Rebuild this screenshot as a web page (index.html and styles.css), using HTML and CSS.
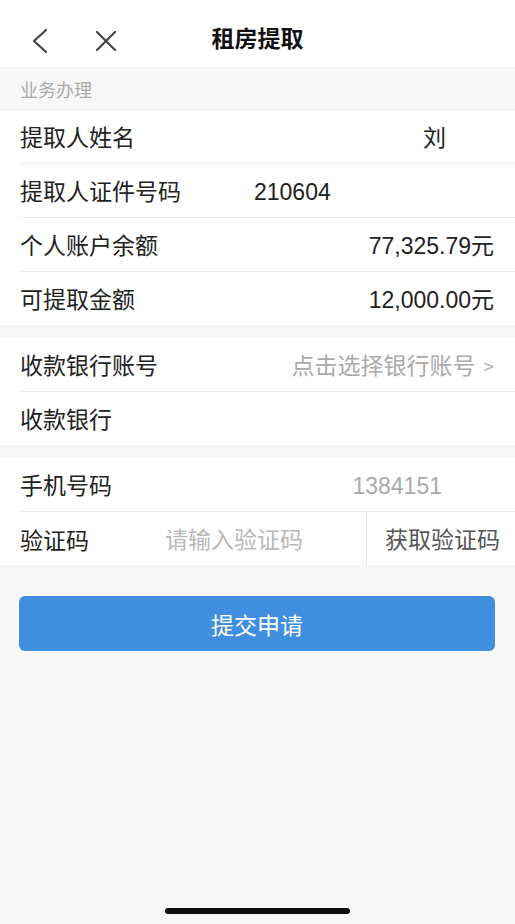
FILE: index.html
```html
<!DOCTYPE html>
<html lang="zh-CN">
<head>
    <meta charset="UTF-8">
    <meta name="viewport" content="width=device-width, initial-scale=1.0">
    <title>租房提取</title>
    <link rel="stylesheet" href="styles.css">
</head>
<body>
    <div class="header">
        <span class="nav-btn back">
            <svg width="20" height="26" viewBox="0 0 20 26"><path d="M15 2 L3 13 L15 24" fill="none" stroke="#444" stroke-width="2.2" stroke-linecap="round" stroke-linejoin="round"/></svg>
        </span>
        <span class="nav-btn close">
            <svg width="22" height="22" viewBox="0 0 22 22"><path d="M2 2 L20 20 M20 2 L2 20" fill="none" stroke="#444" stroke-width="2.2" stroke-linecap="round"/></svg>
        </span>
        <h1>租房提取</h1>
    </div>

    <div class="section-title">业务办理</div>

    <div class="group">
        <div class="row">
            <span class="label">提取人姓名</span>
            <span class="value name">刘</span>
        </div>
        <div class="row">
            <span class="label">提取人证件号码</span>
            <span class="value idno"><span class="num">210604</span></span>
        </div>
        <div class="row">
            <span class="label">个人账户余额</span>
            <span class="value"><span class="num">77,325.79</span>元</span>
        </div>
        <div class="row">
            <span class="label">可提取金额</span>
            <span class="value"><span class="num">12,000.00</span>元</span>
        </div>
    </div>

    <div class="group">
        <div class="row">
            <span class="label">收款银行账号</span>
            <span class="value muted">点击选择银行账号<span class="arrow">&gt;</span></span>
        </div>
        <div class="row">
            <span class="label">收款银行</span>
        </div>
    </div>

    <div class="group">
        <div class="row">
            <span class="label">手机号码</span>
            <span class="value muted phone"><span class="num">1384151</span></span>
        </div>
        <div class="row code-row">
            <span class="label">验证码</span>
            <span class="placeholder">请输入验证码</span>
            <span class="get-code">获取验证码</span>
        </div>
    </div>

    <div class="actions">
        <button>提交申请</button>
    </div>

    <div class="home-bar"></div>
</body>
</html>
```

FILE: styles.css
```css
body {
    margin: 0;
    width: 515px;
    height: 924px;
    background-color: #f7f7f7;
    font-family: "Noto Sans CJK SC", "Noto Sans", sans-serif;
    color: #222;
    position: relative;
    overflow: hidden;
}
.num {
    font-family: "Liberation Sans", Arial, sans-serif;
}
.header {
    height: 67px;
    background-color: white;
    display: flex;
    align-items: center;
    position: relative;
}
.nav-btn {
    display: flex;
    padding-top: 14px;
}
.back {
    margin-left: 31px;
}
.close {
    margin-left: 44px;
}
.header h1 {
    position: absolute;
    left: 0;
    right: 0;
    top: 22px;
    margin: 0;
    text-align: center;
    font-size: 23px;
    line-height: 30px;
    font-weight: bold;
    color: #111;
}
.section-title {
    height: 43px;
    padding-left: 20px;
    padding-top: 2px;
    box-sizing: border-box;
    display: flex;
    align-items: center;
    font-size: 18px;
    color: #aaa;
    border-bottom: 1px solid #ececec;
}
.group {
    background-color: white;
    margin-bottom: 13px;
}
.row {
    height: 54px;
    margin-left: 20px;
    padding-right: 21px;
    padding-bottom: 2px;
    display: flex;
    align-items: center;
    font-size: 23px;
    border-bottom: 1px solid #eeeeee;
    box-sizing: border-box;
}
.row:last-child {
    border-bottom: none;
    height: 53px;
}
.label {
    flex-shrink: 0;
}
.value {
    margin-left: auto;
}
.value.name {
    margin-right: 48px;
}
.value.idno {
    margin-left: 73px;
}
.muted {
    color: #aaa;
}
.arrow {
    font-size: 19px;
    margin-left: 8px;
    color: #b5b5b5;
}
.value.phone {
    margin-right: 52px;
}
.code-row {
    padding-right: 0;
    padding-bottom: 0;
}
.placeholder {
    margin-left: 76px;
    margin-bottom: 2px;
    color: #b8b8b8;
    width: 200px;
}
.get-code {
    margin-left: auto;
    height: 100%;
    border-left: 1px solid #e4e4e4;
    padding: 0 15px 2px 18px;
    box-sizing: border-box;
    display: flex;
    align-items: center;
    color: #555;
}
.actions {
    padding: 18px 20px 0 19px;
}
button {
    width: 100%;
    height: 55px;
    border: none;
    border-radius: 6px;
    background-color: #3f8fde;
    color: white;
    font-family: inherit;
    font-size: 23px;
}
.home-bar {
    position: absolute;
    left: 165px;
    bottom: 10px;
    width: 185px;
    height: 6px;
    border-radius: 3px;
    background-color: #111;
}
```
